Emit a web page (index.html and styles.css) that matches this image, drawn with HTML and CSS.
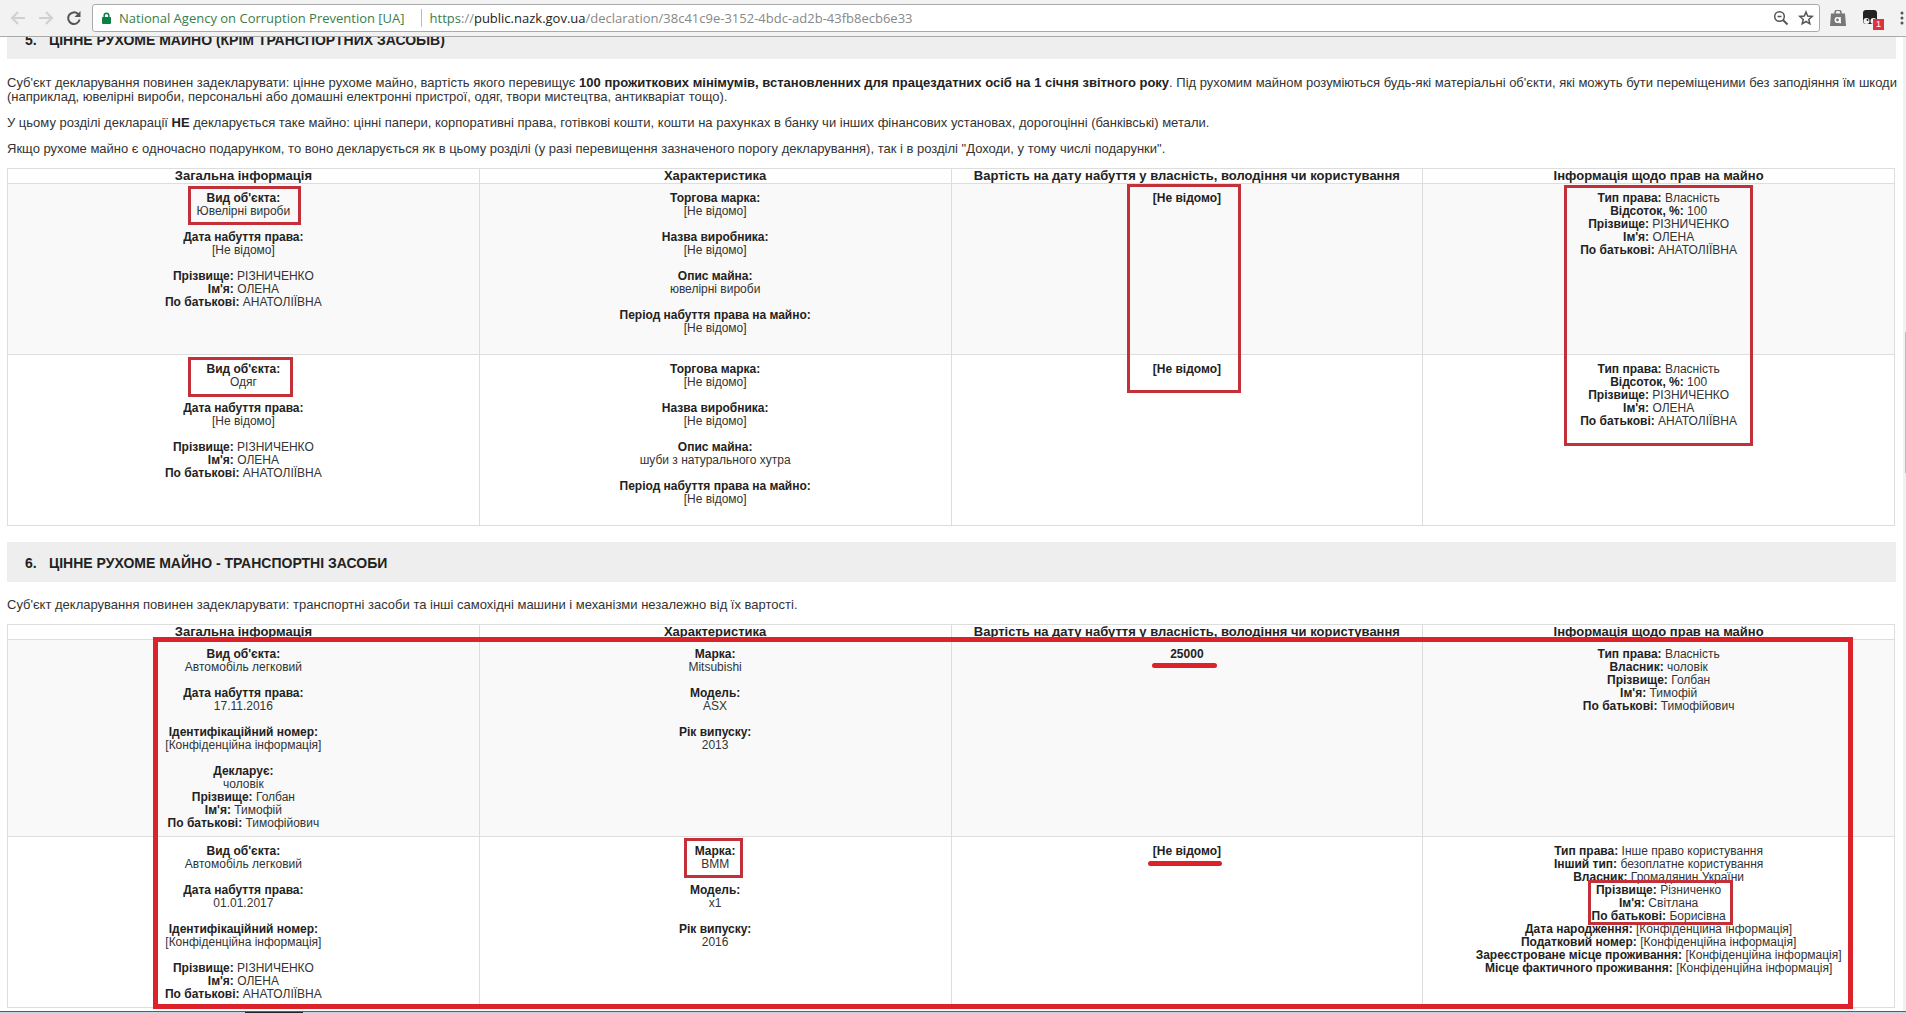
FILE: index.html
```html
<!DOCTYPE html>
<html lang="uk">
<head>
    <meta charset="UTF-8">
    <meta name="viewport" content="width=device-width, initial-scale=1.0">
    <title>National Agency on Corruption Prevention</title>
    <link rel="stylesheet" href="styles.css">
</head>
<body>
    <header class="toolbar">
        <button class="nav-btn disabled" aria-label="Back">
            <svg viewBox="0 0 16 16"><path d="M15 8H2M8 2L2 8l6 6"/></svg>
        </button>
        <button class="nav-btn disabled" aria-label="Forward">
            <svg viewBox="0 0 16 16"><path d="M1 8h13M8 2l6 6-6 6"/></svg>
        </button>
        <button class="nav-btn" aria-label="Reload">
            <svg viewBox="0 0 16 16"><path d="M13.6 9.500A5.800 5.800 0 1 1 12 4"/><path class="solid" d="M14.500 1v6h-6z"/></svg>
        </button>
        <div class="omnibox">
            <svg class="lock" viewBox="0 0 9 12"><path d="M2.200 5.500V3.500a2.300 2.300 0 0 1 4.600 0v2"/><rect y="5" width="9" height="7" rx="1"/></svg>
            <span class="owner">National Agency on Corruption Prevention [UA]</span>
            <a class="url" href="https://public.nazk.gov.ua/declaration/38c41c9e-3152-4bdc-ad2b-43fb8ecb6e33"><span class="scheme">https</span>://<span class="host">public.nazk.gov.ua</span>/declaration/38c41c9e-3152-4bdc-ad2b-43fb8ecb6e33</a>
            <button class="box-btn" aria-label="Zoom">
                <svg viewBox="0 0 16 16"><circle cx="6.500" cy="6.500" r="4.800"/><path d="M4.500 6.500h4"/><path class="thick" d="M10 10l4.500 4.500"/></svg>
            </button>
            <button class="box-btn" aria-label="Bookmark">
                <svg viewBox="0 0 16 16"><path d="M8 2l1.700 4 4.500.4-3.400 3 1 4.400L8 11.500l-3.800 2.300 1-4.400-3.400-3L6.300 6z"/></svg>
            </button>
        </div>
        <button class="ext-btn" aria-label="Extension">
            <svg viewBox="0 0 16 16"><path d="M5 5V3a3 3 0 0 1 6 0v2" stroke="#777"/><path d="M1 3.500h14l1 12.500H0z" fill="#777" stroke="none"/><circle cx="7.500" cy="10" r="2.200" stroke="#fff"/><path d="M10 7v5.500h1" stroke="#fff"/></svg>
        </button>
        <button class="ext-btn" aria-label="Scripts">
            <svg viewBox="0 0 16 16"><g stroke="none"><rect x="1" width="14" height="14" rx="3" fill="#222"/><circle cx="4.500" cy="11" r="3" fill="#f2f2f2"/><circle cx="11.500" cy="11" r="3" fill="#f2f2f2"/><circle cx="5.500" cy="10" r="1" fill="#222"/></g></svg>
            <span class="count">1</span>
        </button>
        <button class="menu-btn" aria-label="Menu">
            <svg viewBox="0 0 4 16"><circle cx="2" cy="3" r="1.500"/><circle cx="2" cy="8" r="1.500"/><circle cx="2" cy="13" r="1.500"/></svg>
        </button>
    </header>

    <main class="page">
        <h2 class="section-title first"><span class="num">5.</span>ЦІННЕ РУХОМЕ МАЙНО (КРІМ ТРАНСПОРТНИХ ЗАСОБІВ)</h2>
        <p>Суб'єкт декларування повинен задекларувати: цінне рухоме майно, вартість якого перевищує <b>100 прожиткових мінімумів, встановленних для працездатних осіб на 1 січня звітного року</b>. Під рухомим майном розуміються будь-які матеріальні об'єкти, які можуть бути переміщеними без заподіяння їм шкоди<br>(наприклад, ювелірні вироби, персональні або домашні електронні пристрої, одяг, твори мистецтва, антикваріат тощо).</p>
        <p>У цьому розділі декларації <b>НЕ</b> декларується таке майно: цінні папери, корпоративні права, готівкові кошти, кошти на рахунках в банку чи інших фінансових установах, дорогоцінні (банківські) метали.</p>
        <p>Якщо рухоме майно є одночасно подарунком, то воно декларується як в цьому розділі (у разі перевищення зазначеного порогу декларування), так і в розділі "Доходи, у тому числі подарунки".</p>

        <table>
            <thead>
                <tr>
                    <th>Загальна інформація</th>
                    <th>Характеристика</th>
                    <th>Вартість на дату набуття у власність, володіння чи користування</th>
                    <th>Інформація щодо прав на майно</th>
                </tr>
            </thead>
            <tbody>
                <tr>
                    <td>
                        <div class="field"><b>Вид об'єкта:</b><br>Ювелірні вироби</div>
                        <div class="field"><b>Дата набуття права:</b><br>[Не відомо]</div>
                        <div><b>Прізвище:</b> РІЗНИЧЕНКО<br><b>Ім'я:</b> ОЛЕНА<br><b>По батькові:</b> АНАТОЛІЇВНА</div>
                    </td>
                    <td>
                        <div class="field"><b>Торгова марка:</b><br>[Не відомо]</div>
                        <div class="field"><b>Назва виробника:</b><br>[Не відомо]</div>
                        <div class="field"><b>Опис майна:</b><br>ювелірні вироби</div>
                        <div class="field"><b>Період набуття права на майно:</b><br>[Не відомо]</div>
                    </td>
                    <td><b>[Не відомо]</b></td>
                    <td><b>Тип права:</b> Власність<br><b>Відсоток, %:</b> 100<br><b>Прізвище:</b> РІЗНИЧЕНКО<br><b>Ім'я:</b> ОЛЕНА<br><b>По батькові:</b> АНАТОЛІЇВНА</td>
                </tr>
                <tr>
                    <td>
                        <div class="field"><b>Вид об'єкта:</b><br>Одяг</div>
                        <div class="field"><b>Дата набуття права:</b><br>[Не відомо]</div>
                        <div><b>Прізвище:</b> РІЗНИЧЕНКО<br><b>Ім'я:</b> ОЛЕНА<br><b>По батькові:</b> АНАТОЛІЇВНА</div>
                    </td>
                    <td>
                        <div class="field"><b>Торгова марка:</b><br>[Не відомо]</div>
                        <div class="field"><b>Назва виробника:</b><br>[Не відомо]</div>
                        <div class="field"><b>Опис майна:</b><br>шуби з натурального хутра</div>
                        <div class="field"><b>Період набуття права на майно:</b><br>[Не відомо]</div>
                    </td>
                    <td><b>[Не відомо]</b></td>
                    <td><b>Тип права:</b> Власність<br><b>Відсоток, %:</b> 100<br><b>Прізвище:</b> РІЗНИЧЕНКО<br><b>Ім'я:</b> ОЛЕНА<br><b>По батькові:</b> АНАТОЛІЇВНА</td>
                </tr>
            </tbody>
        </table>

        <h2 class="section-title"><span class="num">6.</span>ЦІННЕ РУХОМЕ МАЙНО - ТРАНСПОРТНІ ЗАСОБИ</h2>
        <p>Суб'єкт декларування повинен задекларувати: транспортні засоби та інші самохідні машини і механізми незалежно від їх вартості.</p>

        <table>
            <thead>
                <tr>
                    <th>Загальна інформація</th>
                    <th>Характеристика</th>
                    <th>Вартість на дату набуття у власність, володіння чи користування</th>
                    <th>Інформація щодо прав на майно</th>
                </tr>
            </thead>
            <tbody>
                <tr>
                    <td>
                        <div class="field"><b>Вид об'єкта:</b><br>Автомобіль легковий</div>
                        <div class="field"><b>Дата набуття права:</b><br>17.11.2016</div>
                        <div class="field"><b>Ідентифікаційний номер:</b><br>[Конфіденційна інформація]</div>
                        <div><b>Декларує:</b><br>чоловік<br><b>Прізвище:</b> Голбан<br><b>Ім'я:</b> Тимофій<br><b>По батькові:</b> Тимофійович</div>
                    </td>
                    <td>
                        <div class="field"><b>Марка:</b><br>Mitsubishi</div>
                        <div class="field"><b>Модель:</b><br>ASX</div>
                        <div class="field"><b>Рік випуску:</b><br>2013</div>
                    </td>
                    <td><b>25000</b></td>
                    <td><b>Тип права:</b> Власність<br><b>Власник:</b> чоловік<br><b>Прізвище:</b> Голбан<br><b>Ім'я:</b> Тимофій<br><b>По батькові:</b> Тимофійович</td>
                </tr>
                <tr>
                    <td>
                        <div class="field"><b>Вид об'єкта:</b><br>Автомобіль легковий</div>
                        <div class="field"><b>Дата набуття права:</b><br>01.01.2017</div>
                        <div class="field"><b>Ідентифікаційний номер:</b><br>[Конфіденційна інформація]</div>
                        <div><b>Прізвище:</b> РІЗНИЧЕНКО<br><b>Ім'я:</b> ОЛЕНА<br><b>По батькові:</b> АНАТОЛІЇВНА</div>
                    </td>
                    <td>
                        <div class="field"><b>Марка:</b><br>BMM</div>
                        <div class="field"><b>Модель:</b><br>x1</div>
                        <div class="field"><b>Рік випуску:</b><br>2016</div>
                    </td>
                    <td><b>[Не відомо]</b></td>
                    <td><b>Тип права:</b> Інше право користування<br><b>Інший тип:</b> безоплатне користування<br><b>Власник:</b> Громадянин України<br><b>Прізвище:</b> Різниченко<br><b>Ім'я:</b> Світлана<br><b>По батькові:</b> Борисівна<br><b>Дата народження:</b> [Конфіденційна інформація]<br><b>Податковий номер:</b> [Конфіденційна інформація]<br><b>Зареєстроване місце проживання:</b> [Конфіденційна інформація]<br><b>Місце фактичного проживання:</b> [Конфіденційна інформація]</td>
                </tr>
            </tbody>
        </table>
    </main>

    <!-- red marks over the tables -->
    <div class="mark jewelry"></div>
    <div class="mark clothes"></div>
    <div class="mark value"></div>
    <div class="mark rights"></div>
    <div class="mark vehicles"></div>
    <div class="mark brand"></div>
    <div class="mark owner-name"></div>
    <div class="underline price"></div>
    <div class="underline unknown"></div>

    <div class="scrollbar"><div class="thumb"></div></div>
    <footer class="taskbar"><div class="task"></div></footer>
</body>
</html>
```
FILE: styles.css
```css
body {
    margin: 0;
    position: relative;
    min-height: 100vh;
    background: #fff;
    font-family: Arial, "Liberation Sans", sans-serif;
    font-size: 12px;
    color: #333;
    overflow: hidden;
}

/* browser bar */
.toolbar {
    box-sizing: border-box;
    display: flex;
    align-items: center;
    height: 37px;
    padding-left: 4px;
    background: #f2f2f2;
    border-bottom: 1px solid #aaa;
}

button {
    display: flex;
    align-items: center;
    justify-content: center;
    flex: none;
    border: none;
    background: none;
    padding: 0;
}

svg {
    width: 16px;
    height: 16px;
    fill: none;
    stroke: #555;
    stroke-width: 1.5;
}

.nav-btn {
    width: 28px;
}

.nav-btn svg {
    stroke-width: 2;
}

.nav-btn.disabled svg {
    stroke: #d0d0d0;
}

.nav-btn .solid {
    fill: #555;
    stroke: none;
}

.thick {
    stroke-width: 2;
}

.omnibox {
    box-sizing: border-box;
    flex: 1;
    display: flex;
    align-items: center;
    height: 28px;
    margin: 0 10px 0 4px;
    padding: 0 1px 0 9px;
    border: 1px solid #aaa;
    border-radius: 3px;
    background: #fff;
    font-family: "Open Sans", "Noto Sans", sans-serif;
    font-size: 13px;
    white-space: nowrap;
}

.lock {
    width: 9px;
    height: 12px;
    margin-right: 8px;
    stroke: #0b8043;
}

.lock rect {
    fill: #0b8043;
    stroke: none;
}

.owner {
    padding-right: 16px;
    border-right: 1px solid #bbb;
    color: #3a7d4c;
}

.url {
    flex: 1;
    padding-left: 8px;
    color: #888;
    text-decoration: none;
}

.scheme {
    color: #3a7d4c;
}

.host {
    color: #222;
}

.box-btn {
    width: 25px;
}

.ext-btn {
    position: relative;
    width: 16px;
    margin-right: 16px;
}

.count {
    position: absolute;
    left: 11px;
    top: 9px;
    width: 11px;
    background: #e0323a;
    color: #fff;
    font: 9px/11px Arial, "Liberation Sans", sans-serif;
    text-align: center;
}

.menu-btn {
    width: 4px;
    margin: 0 2px 0 6px;
}

.menu-btn svg {
    width: 4px;
    fill: #555;
    stroke: none;
}

/* declaration */
.page {
    padding: 0 10px 0 7px;
    overflow: hidden;
}

.section-title {
    margin: 16px 0;
    padding: 2px 18px 0;
    background: #eee;
    color: #222;
    font-size: 14px;
    line-height: 38px;
}

.section-title.first {
    margin: -18px 0 17px;
}

.num {
    display: inline-block;
    width: 24px;
}

/* the intro text runs up to the scrollbar */
p {
    margin: 0 -7px 12px 0;
    font-size: 13px;
    line-height: 14px;
}

b {
    color: #222;
}

table {
    width: calc(100% - 1px);
    margin-top: 12px;
    table-layout: fixed;
    border-collapse: collapse;
}

th, td {
    border: 1px solid #ddd;
    text-align: center;
    vertical-align: top;
    line-height: 13px;
}

th {
    padding: 0;
    color: #222;
    font-size: 13px;
    line-height: 14px;
}

td {
    padding: 8px 7px 6px;
}

tbody tr:nth-child(odd) {
    background: #f9f9f9;
}

.field {
    margin-bottom: 13px;
}

/* red marks */
.mark {
    position: absolute;
    box-sizing: border-box;
    border: 3px solid #c4303a;
}

.jewelry {
    left: 188px;
    top: 186px;
    width: 113px;
    height: 39px;
}

.clothes {
    left: 188px;
    top: 357px;
    width: 105px;
    height: 40px;
}

.value {
    left: 1127px;
    top: 184px;
    width: 114px;
    height: 209px;
}

.rights {
    left: 1564px;
    top: 185px;
    width: 189px;
    height: 261px;
}

.vehicles {
    left: 153px;
    top: 637px;
    width: 1700px;
    height: 372px;
    border: 5px solid #dc222b;
}

.brand {
    left: 684px;
    top: 838px;
    width: 59px;
    height: 40px;
}

.owner-name {
    left: 1588px;
    top: 880px;
    width: 145px;
    height: 45px;
}

.underline {
    position: absolute;
    height: 5px;
    border-radius: 3px;
    background: #dc222b;
}

.price {
    left: 1152px;
    top: 663px;
    width: 65px;
}

.unknown {
    left: 1148px;
    top: 861px;
    width: 74px;
}

.scrollbar {
    position: absolute;
    top: 37px;
    right: 0;
    bottom: 0;
    width: 3px;
    background: #f1f1f1;
}

.thumb {
    height: 141px;
    margin: 295px 0 0 2px;
    background: #bbb;
}

.taskbar {
    position: absolute;
    left: 0;
    right: 0;
    bottom: 0;
    height: 1px;
    padding-left: 245px;
    border-top: 1px solid #55606f;
    background: #c5d3e2;
}

.task {
    width: 58px;
    height: 1px;
    background: #222;
}
```
